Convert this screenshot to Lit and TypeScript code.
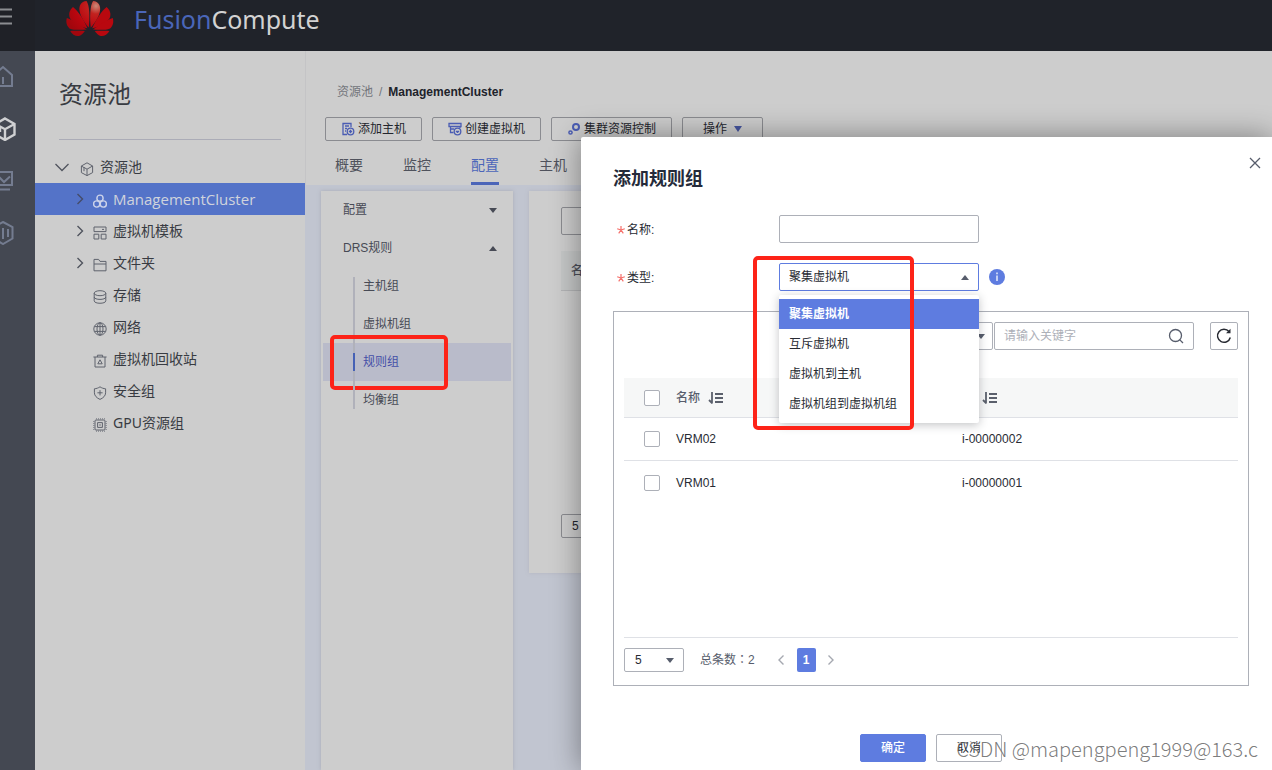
import { LitElement, html, css, svg } from "lit";
import { customElement, state } from "lit/decorators.js";

const ICONS: Record<string, unknown> = {
  cube: svg`<path d="M7 .8 12.6 4v6.6L7 13.6 1.4 10.6V4Z M1.4 4 4 5.6M12.6 4 7 7.2v6.4M4 5.4v3.8M4 5.4 7 7.2"/>`,
  cluster: svg`<circle cx="7" cy="4.2" r="3.1"/><circle cx="3.7" cy="10" r="3.1"/><circle cx="10.3" cy="10" r="3.1"/>`,
  template: svg`<path d="M1 1h12v4.6H1ZM1 8.2h4.8V13H1ZM8.2 8.2H13V13H8.2ZM9 3.4h2"/>`,
  folder: svg`<path d="M1 12.8V1.4h4.6l1.4 2h6v9.4ZM1 6h12"/>`,
  storage: svg`<ellipse cx="7" cy="3.2" rx="5.8" ry="2.5"/><path d="M1.2 3.2v7.6c0 3.3 11.6 3.3 11.6 0V3.2M1.2 7c0 3.2 11.6 3.2 11.6 0"/>`,
  network: svg`<circle cx="7" cy="7" r="6.2"/><ellipse cx="7" cy="7" rx="3" ry="6.2"/><path d="M7 .8v12.4M1.4 4.6h11.2M1.4 9.4h11.2"/>`,
  recycle: svg`<path d="M.4 3h13.2M4.4 3V1.2h5.2V3M2 3v10h10V3M7 5.8 4.8 9.8h4.4Z"/>`,
  shield: svg`<path d="M7 .8c1.6 1.2 3.6 1.8 5.6 2v4c0 3-2.4 5.2-5.6 6.6C3.8 12 1.4 9.8 1.4 6.8v-4C3.4 2.6 5.400 2 7 .8ZM7 4.200v5.200M4.400 6.800h5.200"/>`,
  gpu: svg`<rect x="2" y="2" width="10" height="10" rx="1"/><path d="M4.600 4.600h4.800v4.800H4.600ZM7 6.200v1.600"/><path stroke-dasharray="1 1" stroke-width=".8" d="M3 .8h9M3 13.200h9M.8 3v9M13.200 3v9"/>`,
};

const TREE = [
  { icon: "template", label: "虚拟机模板", open: true },
  { icon: "folder", label: "文件夹", open: true },
  { icon: "storage", label: "存储", open: false },
  { icon: "network", label: "网络", open: false },
  { icon: "recycle", label: "虚拟机回收站", open: false },
  { icon: "shield", label: "安全组", open: false },
  { icon: "gpu", label: "GPU资源组", open: false },
];

const glyph = (name: string) =>
  html`<svg class="glyph" viewBox="0 0 14 14" width="14" height="14" fill="none" stroke="currentColor" aria-hidden="true">${ICONS[name]}</svg>`;

const chevron = html`<svg class="chevron" viewBox="0 0 8 12" width="8" height="12" fill="none" stroke="currentColor" stroke-width="1.4"><path d="M1.500 1 6.500 6 1.500 11"/></svg>`;

const sortIcon = html`<svg viewBox="0 0 16 14" width="16" height="14" fill="none" stroke="#5b606c" stroke-width="1.8"><path d="M4 1v11.500M4.300 12.300 1 9M7 3h8M7 7h8M7 11h8"/></svg>`;

const petals = svg`
  <path d="M22.800 27.500C24 18 23.600 5 20.500 1 15 1.500 12.600 6 13.600 11c.9 6 5.400 12.500 9.200 16.500Z"/>
  <path d="M21.400 28.300C18 20 12 11 7 7 3.500 10 2.200 14 4 18.200c2.300 4.300 11 9 17.400 10.100Z"/>
  <path d="M20.600 29.400C14 25 6 19.500.8 18-.3 22 .5 26 3.500 28.400c4.500 1.900 11.500 1.600 17.100 1Z"/>
  <path d="M18.800 30.900C13 30.800 8 30.900 4.200 31c1.800 3.500 5.800 5.600 8.800 4.900 2.500-.9 4.500-2.900 5.800-5Z"/>`;

@customElement("top-bar")
class TopBar extends LitElement {
  static styles = css`
    :host { display: flex; align-items: flex-start; height: 51px; background: #20232a; color: #d2d2d2; }
    .menu { flex: none; width: 35px; height: 51px; padding: 0; border: 0; background: #1f2127; color: #8b8d91; display: flex; align-items: flex-start; }
    .menu svg { margin-top: 7px; }
    .logo { margin: 0 0 0 31px; flex: none; }
    .brand { margin-left: 20px; font: 25px/38px "Noto Sans", "Open Sans", sans-serif; }
    .brand span { color: #4a66b8; }
  `;
  render() {
    return html`
      <button class="menu" aria-label="菜单">
        <svg width="12" height="19" viewBox="0 0 12 19" stroke="currentColor" stroke-width="2"><path d="M0 2.500h12M0 9.500h12M0 16.500h12"/></svg>
      </button>
      <svg class="logo" width="48" height="37" viewBox="0 0 48 37" aria-hidden="true">
        <defs><radialGradient id="red" gradientUnits="userSpaceOnUse" cx="30" cy="6" r="32">
          <stop offset="0" stop-color="#c98a78"/><stop offset=".25" stop-color="#c2221f"/><stop offset=".65" stop-color="#b9060f"/><stop offset="1" stop-color="#a3060d"/>
        </radialGradient></defs>
        <g fill="url(#red)">${petals}<path d="M24.800 27.500C23.600 18 24 5 27.100 1c5.500.5 7.900 5 6.900 10-.9 6-5.400 12.500-9.200 16.500Z"/></g>
        <g fill="#b9080f" transform="matrix(-1 0 0 1 47.600 0)">
          <path d="M21.400 28.300C18 20 12 11 7 7 3.500 10 2.200 14 4 18.200c2.300 4.300 11 9 17.400 10.100Z"/>
          <path d="M20.600 29.400C14 25 6 19.500.8 18-.3 22 .5 26 3.500 28.400c4.500 1.900 11.500 1.600 17.100 1Z"/>
          <path d="M18.800 30.900C13 30.800 8 30.900 4.200 31c1.800 3.500 5.800 5.600 8.800 4.900 2.500-.9 4.500-2.900 5.800-5Z"/>
        </g>
      </svg>
      <div class="brand"><span>Fusion</span>Compute</div>
    `;
  }
}

@customElement("resource-tree")
class ResourceTree extends LitElement {
  static styles = css`
    :host { display: flex; flex: none; color: #383b42; }
    .rail { width: 35px; background: #444852; color: #747c90; overflow: hidden; display: flex; flex-direction: column; gap: 28px; padding-top: 14px; box-sizing: border-box; }
    .rail a { color: inherit; display: block; height: 24px; margin-left: -8px; }
    .rail a.on { color: #cfd0d2; }
    .tree { box-sizing: border-box; width: 271px; margin-right: -1px; background: #cdcdcd; border-right: 1px solid #c4c4c6; }
    h1 { margin: 0 24px; padding: 26px 0; border-bottom: 1px solid #abacb7; font-size: 24px; line-height: 36px; font-weight: 400; color: #383b42; }
    ul { list-style: none; margin: 0; padding: 0; }
    .nodes { padding-top: 11px; }
    .row { display: flex; align-items: center; height: 32px; padding-left: 41px; gap: 9px; font: 14px/32px "Noto Sans", "Noto Sans CJK SC", sans-serif; color: inherit; text-decoration: none; }
    .row.root { padding-left: 20px; gap: 6px; }
    .row.root svg:first-child { margin-right: 5px; }
    .row.on { background: #5473c8; color: #d0d3dc; }
    .row.on .name { font-family: "Open Sans", sans-serif; font-size: 15px; }
    .row.on .chevron { color: #454c68; }
    .slot { width: 8px; display: flex; }
    .glyph { color: #5f636d; margin-top: 3px; }
    .chevron { color: #50545e; }
    .row.on .glyph { color: #ccd3ea; stroke-width: 1.4; }
    .name { margin-left: -3px; }
  `;
  render() {
    return html`
      <nav class="rail" aria-label="主导航">
        <a href="#home" aria-label="首页"><svg width="24" height="24" viewBox="0 0 24 24" fill="none" stroke="currentColor" stroke-width="2"><path d="M2 10 11 2l9 8v11H2M11 12v7"/></svg></a>
        <a class="on" href="#pool" aria-label="资源池"><svg width="24" height="24" viewBox="0 0 24 24" fill="none" stroke="currentColor" stroke-width="2.400"><path d="M13 1.500 22.500 7v10.500L13 23 3.500 17.500V7ZM3.500 7 8 9.500 13 12.200 22.500 7M13 12.200V23M8 9v6"/></svg></a>
        <a href="#monitor" aria-label="监控"><svg width="24" height="24" viewBox="0 0 24 24" fill="none" stroke="currentColor" stroke-width="2"><path d="M1 3h19v13H1M7 8l5 5 6-5.500M1 20.500h17"/></svg></a>
        <a href="#system" aria-label="系统"><svg width="24" height="24" viewBox="0 0 24 24" fill="none" stroke="currentColor" stroke-width="2"><path d="M11 1l9.500 5v11.500L11 23 1.500 17.500V6ZM11 7v11M16 8v8"/></svg></a>
      </nav>
      <section class="tree">
        <h1>资源池</h1>
        <ul class="nodes">
          <li><a class="row root" href="#pool"><svg width="14" height="9" viewBox="0 0 14 9" fill="none" stroke="#50545e" stroke-width="1.300"><path d="M.5 1 7 7.500 13.500 1"/></svg>${glyph("cube")}<span>资源池</span></a></li>
          <li><a class="row on" href="#cluster"><span class="slot">${chevron}</span>${glyph("cluster")}<span class="name">ManagementCluster</span></a></li>
          ${TREE.map((n) => html`<li><a class="row" href="#${n.icon}"><span class="slot">${n.open ? chevron : ""}</span>${glyph(n.icon)}<span class="name">${n.label}</span></a></li>`)}
        </ul>
      </section>
    `;
  }
}

@customElement("cluster-page")
class ClusterPage extends LitElement {
  static styles = css`
    :host { display: flex; flex-direction: column; flex: 1; min-width: 0; background: #c1c5d0; color: #4b4e58; font: 12px/20px "Liberation Sans", "Noto Sans CJK SC", sans-serif; }
    .top { background: #cdcdcd; padding: 31px 20px 0; border-left: 1px solid #c4c4c6; margin-right: 0; }
    .crumbs { padding-left: 11px; display: flex; gap: 6px; color: #73757b; }
    .crumbs a { color: inherit; text-decoration: none; }
    .crumbs b { color: #20232b; }
    .actions { display: flex; gap: 10px; margin: 15px 0 0 -1px; }
    .actions button { height: 24px; padding: 0 15px; display: flex; align-items: center; gap: 3px; border: 1px solid #8a8b90; border-radius: 2px; background: none; font: inherit; color: #23252c; white-space: nowrap; }
    .actions button.more { padding: 0 20px; gap: 7px; }
    .tabs { display: flex; gap: 40px; padding-left: 9px; margin-top: 8px; }
    .tabs a { font-size: 14px; line-height: 33px; color: #4f525c; text-decoration: none; border-bottom: 3px solid transparent; white-space: nowrap; }
    .tabs a.on { color: #4b65b9; border-color: #4b65b9; }
    .content { flex: 1; display: flex; gap: 16px; padding: 6px 0 0 16px; }
    .side { flex: none; width: 192px; background: #cdcdcd; box-shadow: 0 0 4px #a9abb6; }
    .group { width: 100%; height: 38px; padding: 0 16px 0 22px; border: 0; background: none; font: inherit; color: #474a55; display: flex; justify-content: space-between; align-items: center; }
    ul { list-style: none; margin: 0; padding: 0 2px; }
    li { position: relative; display: flex; height: 38px; padding-left: 30px; gap: 8px; }
    li::before { content: ""; width: 2px; background: #b0b1ba; }
    li:first-child::before { margin-top: 10px; }
    li:last-child::before { margin-bottom: 10px; }
    li a { color: #474a55; line-height: 38px; text-decoration: none; }
    li.on { background: #b9bbca; }
    li.on::before { background: linear-gradient(#b0b1ba 10px, #4661b5 10px, #4661b5 28px, #b0b1ba 28px); }
    li.on a { color: #454fa8; }
    .mark { position: absolute; left: 7px; top: -8px; width: 118px; height: 55px; box-sizing: border-box; border: 4px solid #fd2318; border-radius: 5px; pointer-events: none; }
    .panel { flex: 1; align-self: flex-start; background: #cdcdcd; padding: 16px 32px 35px; box-shadow: 0 0 4px #b3b5bf; }
    .search { display: block; box-sizing: border-box; width: 200px; height: 28px; border: 1px solid #8a8b90; border-radius: 2px; background: none; }
    table { width: 100%; margin: 16px 0 223px; border-collapse: collapse; }
    th { height: 39px; padding: 0 10px; text-align: left; background: #c5c7c7; border-bottom: 1px solid #b3b4b6; font-weight: 500; }
    .size { appearance: none; width: 60px; height: 24px; padding: 0 10px; border: 1px solid #8a8b90; border-radius: 2px; background: none; font: inherit; color: #23252c; display: block; }
  `;
  render() {
    const down = html`<svg width="8" height="5" viewBox="0 0 8 5" fill="currentColor"><path d="M0 0h8L4 5Z"/></svg>`;
    return html`
      <div class="top">
        <nav class="crumbs"><a href="#pool">资源池</a><span>/</span><b>ManagementCluster</b></nav>
        <div class="actions">
          <button><svg width="14" height="14" viewBox="0 0 14 14" fill="none" stroke="#4b5db3" stroke-width="1.300"><path d="M6 12.500H2V1.500h8V5M4 4h4M4 6.500h2M4 9h1M2 1v12"/><circle cx="9.500" cy="9.500" r="3.300"/><path d="M9.500 7.800v3.400M7.800 9.500h3.400"/></svg>添加主机</button>
          <button><svg width="14" height="14" viewBox="0 0 14 14" fill="none" stroke="#4b5db3" stroke-width="1.300"><path d="M1 1.500h12v3H1ZM2.500 4.500v2.500H6M2.500 7v3.500h3M12 4.500V6"/><circle cx="9.500" cy="9.500" r="3.300"/><path d="M7.800 9.500h3.400M9.500 9v2"/></svg>创建虚拟机</button>
          <button><svg width="14" height="14" viewBox="0 0 14 14" fill="none" stroke="#4b5db3"><circle cx="9" cy="5" r="3" stroke-width="2"/><circle cx="3.500" cy="10.500" r="1.600" stroke-width="1.500"/></svg>集群资源控制</button>
          <button class="more">操作 <svg width="8" height="6" viewBox="0 0 8 6" fill="#46559f"><path d="M0 0h8L4 6Z"/></svg></button>
        </div>
        <nav class="tabs"><a href="#a">概要</a><a href="#b">监控</a><a class="on" href="#c">配置</a><a href="#d">主机</a></nav>
      </div>
      <div class="content">
        <aside class="side">
          <button class="group">配置${down}</button>
          <button class="group">DRS规则<svg width="8" height="5" viewBox="0 0 8 5" fill="currentColor"><path d="M0 5h8L4 0Z"/></svg></button>
          <ul>
            <li><a href="#h">主机组</a></li>
            <li><a href="#v">虚拟机组</a></li>
            <li class="on"><a href="#r">规则组</a><span class="mark"></span></li>
            <li><a href="#e">均衡组</a></li>
          </ul>
        </aside>
        <section class="panel">
          <input class="search" aria-label="搜索" />
          <table><tr><th>名称</th></tr></table>
          <select class="size" aria-label="每页条数"><option>5</option></select>
        </section>
      </div>
    `;
  }
}

@customElement("rule-dialog")
class RuleDialog extends LitElement {
  @state() private types = ["聚集虚拟机", "互斥虚拟机", "虚拟机到主机", "虚拟机组到虚拟机组"];
  @state() private rows = [
    { name: "VRM02", id: "i-00000002" },
    { name: "VRM01", id: "i-00000001" },
  ];
  static styles = css`
    :host { display: block; box-sizing: border-box; background: #fff; color: #282b33; padding: 30px 23px 8px 32px; border-radius: 2px 0 0 0; box-shadow: 0 0 30px rgba(0, 0, 0, 0.4); font: 12px/20px "Liberation Sans", "Noto Sans CJK SC", sans-serif; }
    * { box-sizing: border-box; }
    .head { display: flex; justify-content: space-between; height: 24px; margin-bottom: 24px; }
    h2 { margin: 0; font-size: 18px; line-height: 24px; color: #252b3a; }
    .close { align-self: flex-start; margin: -16px -18px 0 0; padding: 0; width: 24px; height: 24px; border: 0; background: none; display: grid; place-items: center; }
    .close svg { display: block; }
    .field { display: flex; align-items: center; height: 28px; margin-bottom: 20px; }
    .field label { width: 166px; padding: 2px 0 0 4px; display: flex; align-items: center; gap: 2px; }
    .box { position: relative; width: 200px; }
    input[type="text"], select { appearance: none; width: 100%; height: 28px; margin: 0; padding: 0 9px; border: 1px solid #adb0b8; border-radius: 2px; background: #fff; font: inherit; color: #282b33; outline: 0; display: block; }
    .box select { border-color: #5e7ce0; }
    .caret { position: absolute; right: 10px; top: 12px; pointer-events: none; }
    .menu { position: absolute; z-index: 2; top: 32px; left: 0; width: 100%; margin: 0; padding: 4px 0; list-style: none; background: #fff; border-radius: 2px; box-shadow: 0 2px 10px rgba(40, 43, 51, 0.28); }
    .menu li { height: 30px; line-height: 30px; padding: 0 10px; white-space: nowrap; }
    .menu li.on { background: #5e7ce0; color: #fff; font-weight: 700; }
    .mark { position: absolute; z-index: 3; left: -26px; top: -7px; width: 161px; height: 174px; border: 4px solid #fd2318; border-radius: 5px; pointer-events: none; }
    .info { margin-left: 10px; display: block; }
    .grid { border: 1px solid #adb0b8; padding: 10px 10px 13px; margin-bottom: 48px; }
    .tools { display: flex; justify-content: flex-end; margin-bottom: 28px; }
    .filter { position: relative; width: 120px; margin-right: 1px; }
    .filter .caret { right: 8px; }
    .search { position: relative; width: 200px; }
    .search input { padding-right: 32px; }
    .search input::placeholder { color: #adb0b8; opacity: 1; }
    .search svg { position: absolute; right: 10px; top: 6px; }
    .refresh { width: 28px; height: 28px; padding: 0; margin-left: 16px; border: 1px solid #adb0b8; border-radius: 2px; background: #fff; display: grid; place-items: center; }
    .body { min-height: 260px; border-bottom: 1px solid #dfe1e6; margin-bottom: 10px; }
    table { width: 100%; border-collapse: separate; border-spacing: 0; table-layout: fixed; }
    th { height: 40px; background: #f6f7f7; text-align: left; color: #575d6c; padding: 0; border-bottom: 1px solid #dfe1e6; font-weight: 500; }
    td { height: 43px; padding: 0; border-bottom: 1px solid #dfe1e6; }
    tbody tr:last-child td { border-bottom: 0; }
    .pick { width: 52px; padding-left: 20px; }
    .col { width: 286px; }
    .sort { display: flex; align-items: center; gap: 8px; }
    input[type="checkbox"] { appearance: none; display: block; width: 16px; height: 16px; margin: 0; border: 1px solid #adb0b8; border-radius: 2px; background: #fff; }
    .pager { display: flex; align-items: center; height: 24px; color: #575d6c; }
    .total { font-family: "Liberation Sans", "Noto Sans CJK TC", sans-serif; }
    .size { position: relative; width: 60px; margin-right: 16px; }
    .size select { height: 24px; padding-left: 10px; }
    .size .caret { top: 10px; right: 10px; }
    .pager button { border: 0; background: none; padding: 0; height: 24px; display: grid; place-items: center; }
    .prev { margin-left: 22px; }
    .pager button.page { width: 19px; margin: 0 11px 0 12px; border-radius: 2px; background: #5e7ce0; color: #fff; font: 700 12px/24px "Liberation Sans", sans-serif; }
    .foot { display: flex; justify-content: center; gap: 10px; }
    .foot button { width: 66px; height: 28px; padding: 0; border: 1px solid #adb0b8; border-radius: 2px; background: #fff; font: inherit; color: #282b33; }
    .foot button.ok { background: #5e7ce0; border-color: #5e7ce0; color: #fff; font-weight: 500; }
  `;
  render() {
    const star = html`<svg width="8" height="8" viewBox="0 0 8 8" stroke="#f66f6a" stroke-width="1.200"><path d="M4 0v4M4 4 .2 2.800M4 4l3.800-1.200M4 4 1.700 7.300M4 4l2.300 3.300"/></svg>`;
    const down = html`<svg class="caret" width="8" height="5" viewBox="0 0 8 5" fill="#575d6c"><path d="M0 0h8L4 5Z"/></svg>`;
    return html`
      <div class="head">
        <h2>添加规则组</h2>
        <button class="close" aria-label="关闭"><svg width="12" height="12" viewBox="0 0 12 12" stroke="#575d6c" stroke-width="1.300"><path d="M1 1l10 10M11 1 1 11"/></svg></button>
      </div>
      <div class="field">
        <label for="name">${star}名称:</label>
        <div class="box"><input id="name" type="text" /></div>
      </div>
      <div class="field">
        <label for="type">${star}类型:</label>
        <div class="box">
          <select id="type">${this.types.map((t) => html`<option>${t}</option>`)}</select>
          <svg class="caret" width="8" height="5" viewBox="0 0 8 5" fill="#575d6c"><path d="M0 5h8L4 0Z"/></svg>
          <ul class="menu">${this.types.map((t, i) => html`<li class=${i === 0 ? "on" : ""}>${t}</li>`)}</ul>
          <span class="mark"></span>
        </div>
        <svg class="info" width="16" height="16" viewBox="0 0 16 16"><circle cx="8" cy="8" r="8" fill="#5e7ce0"/><path d="M8 3.500v1.800M8 6.500V12" stroke="#dfe5f9" stroke-width="1.600"/></svg>
      </div>
      <section class="grid">
        <div class="tools">
          <div class="filter"><select aria-label="筛选条件"><option>名称</option></select>${down}</div>
          <div class="search">
            <input type="text" placeholder="请输入关键字" aria-label="关键字" />
            <svg width="16" height="16" viewBox="0 0 16 16" fill="none" stroke="#575d6c" stroke-width="1.300"><circle cx="7.500" cy="7.500" r="6"/><path d="M11.600 11.600 15 15"/></svg>
          </div>
          <button class="refresh" aria-label="刷新"><svg width="16" height="16" viewBox="0 0 16 16" fill="none" stroke="#282b33" stroke-width="1.500"><path d="M14.300 9.500A6.500 6.500 0 1 1 13 3.600"/><path d="M14.500.8v4.500H10Z" fill="#282b33" stroke="none"/></svg></button>
        </div>
        <div class="body">
          <table>
            <thead><tr>
              <th class="pick"><input type="checkbox" aria-label="全选" /></th>
              <th class="col"><span class="sort">名称${sortIcon}</span></th>
              <th><span class="sort">ID${sortIcon}</span></th>
            </tr></thead>
            <tbody>${this.rows.map((r) => html`<tr>
              <td class="pick"><input type="checkbox" aria-label=${r.name} /></td><td>${r.name}</td><td>${r.id}</td>
            </tr>`)}</tbody>
          </table>
        </div>
        <div class="pager">
          <div class="size"><select aria-label="每页条数"><option>5</option></select>${down}</div>
          <span class="total">总条数：2</span>
          <button class="prev" aria-label="上一页"><svg width="8" height="10" viewBox="0 0 8 10" fill="none" stroke="#a5a8b0" stroke-width="1.400"><path d="M6.500.5 2 5l4.500 4.500"/></svg></button>
          <button class="page">1</button>
          <button aria-label="下一页"><svg width="8" height="10" viewBox="0 0 8 10" fill="none" stroke="#a5a8b0" stroke-width="1.400"><path d="M1.500.5 6 5 1.500 9.500"/></svg></button>
        </div>
      </section>
      <div class="foot"><button class="ok">确定</button><button>取消</button></div>
    `;
  }
}

@customElement("app-root")
class AppRoot extends LitElement {
  static styles = css`
    :host { display: flex; flex-direction: column; position: relative; height: 100vh; overflow: hidden; font-family: "Liberation Sans", "Noto Sans CJK SC", sans-serif; }
    .main { flex: 1; display: flex; min-height: 0; }
    .dialog { position: absolute; top: 137px; right: 0; bottom: 0; left: 581px; }
    .credit { position: absolute; right: 14px; bottom: 7px; font: 300 20px/28px "Noto Sans CJK SC", sans-serif; color: rgba(90, 90, 90, 0.8); text-shadow: -1px -1px 0 rgba(255, 255, 255, 0.8); white-space: nowrap; pointer-events: none; }
  `;
  render() {
    return html`
      <top-bar></top-bar>
      <div class="main"><resource-tree></resource-tree><cluster-page></cluster-page></div>
      <rule-dialog class="dialog"></rule-dialog>
      <div class="credit">CSDN @mapengpeng1999@163.c</div>
    `;
  }
}
